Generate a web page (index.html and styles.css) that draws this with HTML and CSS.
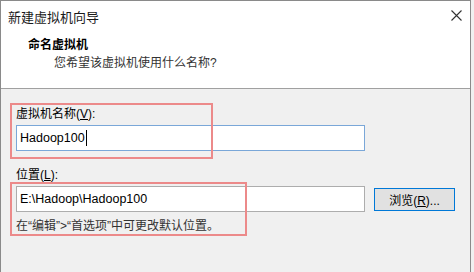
FILE: index.html
```html
<!DOCTYPE html>
<html lang="zh">
<head>
    <meta charset="UTF-8">
    <title>新建虚拟机向导</title>
    <link rel="stylesheet" href="styles.css">
</head>
<body>
    <div class="window">
        <div class="header">
            <div class="titlebar">
                <span class="title">新建虚拟机向导</span>
                <svg class="close" width="11" height="11" viewBox="0 0 11 11">
                    <path d="M0.5 0.5 L10.5 10.5 M10.5 0.5 L0.5 10.5" stroke="#333" stroke-width="1.1" fill="none"/>
                </svg>
            </div>
            <div class="heading">命名虚拟机</div>
            <div class="subheading">您希望该虚拟机使用什么名称?</div>
        </div>

        <div class="content">
            <div class="mark mark-name"></div>
            <div class="mark mark-location"></div>

            <div class="label">虚拟机名称(<u>V</u>):</div>
            <div class="field field-active">Hadoop100<span class="caret"></span></div>

            <div class="label label-location">位置(<u>L</u>):</div>
            <div class="row">
                <div class="field">E:\Hadoop\Hadoop100</div>
                <button class="button">浏览(<u>R</u>)...</button>
            </div>
            <div class="hint">在“编辑”&gt;“首选项”中可更改默认位置。</div>
        </div>
    </div>
</body>
</html>
```

FILE: styles.css
```css
body {
    margin: 0;
    background-color: #f0f0f0;
    font-family: "Liberation Sans", "Noto Sans CJK SC", sans-serif;
    font-size: 12px;
    color: #000000;
    overflow: hidden;
}
.window {
    width: 469px;
    height: 271px;
    border-top: 1px solid #8a8a8a;
    border-left: 1px solid #8a8a8a;
    border-right: 1px solid #8a8a8a;
    background-color: #f0f0f0;
}
.header {
    box-sizing: border-box;
    height: 88px;
    background-color: #ffffff;
    border-bottom: 1px solid #a0a0a0;
}
.titlebar {
    display: flex;
    justify-content: space-between;
    align-items: flex-start;
    padding: 8px 8px 0 7px;
    height: 30px;
    box-sizing: border-box;
}
.title {
    font-size: 13px;
    line-height: 18px;
    color: #1a1a1a;
}
.close {
    margin-top: 1px;
}
.heading {
    padding-left: 27px;
    margin-top: 6px;
    font-weight: bold;
    line-height: 16px;
}
.subheading {
    padding-left: 53px;
    margin-top: 2px;
    line-height: 16px;
    color: #333333;
}
.content {
    position: relative;
    padding: 17px 0 0 15px;
}
.label {
    line-height: 16px;
    margin-bottom: 3px;
}
.label-location {
    margin-top: 16px;
}
.field {
    width: 349px;
    height: 26px;
    box-sizing: border-box;
    border: 1px solid #adadad;
    background-color: #ffffff;
    padding-left: 3px;
    font-size: 12.5px;
    line-height: 24px;
    display: flex;
    align-items: center;
}
.field-active {
    border-color: #7aa7d8;
}
.caret {
    display: inline-block;
    width: 1px;
    height: 16px;
    background-color: #000000;
    margin-left: 1px;
}
.row {
    display: flex;
    align-items: center;
    gap: 9px;
}
.button {
    width: 81px;
    height: 23px;
    box-sizing: border-box;
    border: 1px solid #0078d7;
    background-color: #e1e1e1;
    font-family: "Liberation Sans", "Noto Sans CJK SC", sans-serif;
    font-size: 12px;
    padding: 0;
    color: #000000;
}
.hint {
    margin-top: 6px;
    line-height: 16px;
    color: #333333;
}
.mark {
    position: absolute;
    border: 2px solid #ec8a8a;
    box-sizing: border-box;
}
.mark-name {
    left: 9px;
    top: 14px;
    width: 203px;
    height: 56px;
}
.mark-location {
    left: 9px;
    top: 93px;
    width: 237px;
    height: 54px;
}
```
